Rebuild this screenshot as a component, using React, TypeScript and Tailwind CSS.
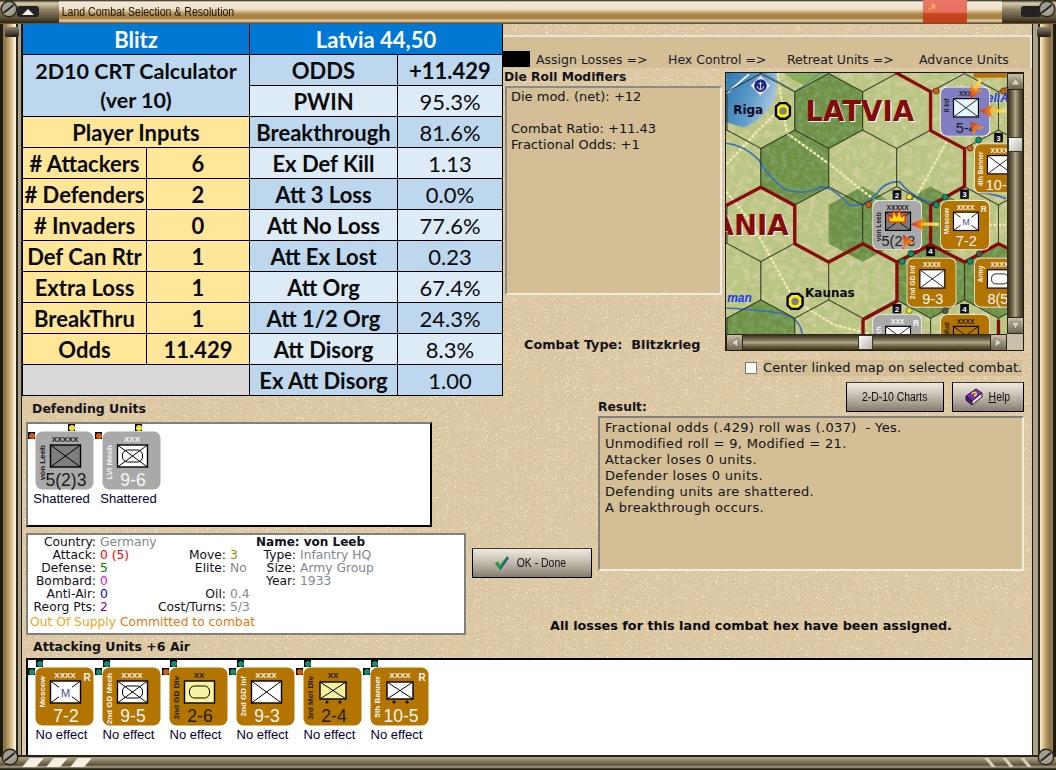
import React from 'react';

// ---------- counters ----------

type BoxKind = 'x' | 'm' | 'mech' | 'oval' | 'wheels' | 'xsmall';

interface CounterSpec {
  name: string;
  size: string;
  value: string;
  tone: 'orange' | 'gray' | 'purple';
  box: BoxKind;
  dark?: boolean;
  sizeDark?: boolean;
  reserve?: boolean;
  nameTop?: number;
  fill?: string;
  fire?: boolean;
}

const toneFill = { orange: '#b37400', gray: '#a9a9a9', purple: '#7f7fc2' };

const CounterArt: React.FC<{ c: CounterSpec }> = ({ c }) => {
  const ink = c.dark ? '#1c1c1c' : '#f6f6f6';
  const fill = c.fill ?? '#ffffff';
  const small = c.box === 'wheels' || c.box === 'xsmall';
  const bx = small ? 17 : 15.5;
  const by = small ? 15 : 14;
  const bw = small ? 26 : 30;
  const bh = small ? 17 : 22;
  return (
    <g fontFamily="'Liberation Sans', sans-serif">
      <rect x="0.5" y="0.5" width="58" height="58" rx="7" fill={toneFill[c.tone]} />
      <text x="30" y="11" textAnchor="middle" fontSize="8" fontWeight="700" fill={c.sizeDark ? '#1c1c1c' : '#f4f4f4'}>
        {c.size}
      </text>
      {c.reserve && (
        <text x="52" y="14" textAnchor="middle" fontSize="10" fontWeight="700" fill="#f6f6f6">
          R
        </text>
      )}
      <text
        transform={`translate(10 ${c.nameTop ?? 9}) rotate(-90)`}
        textAnchor="end"
        fontSize="8"
        fontWeight="700"
        fill={c.dark ? '#1c1c1c' : '#f4f4f4'}
      >
        {c.name}
      </text>
      <rect x={bx} y={by} width={bw} height={bh} fill={fill} stroke="#000" strokeWidth="1.4" />
      {c.box !== 'oval' && (
        <path
          d={`M${bx} ${by}L${bx + bw} ${by + bh}M${bx + bw} ${by}L${bx} ${by + bh}`}
          stroke="#000"
          strokeWidth="1"
        />
      )}
      {(c.box === 'oval' || c.box === 'mech') && (
        <rect x={bx + 5} y={by + 5} width={bw - 10} height={bh - 10} rx="5" fill="none" stroke="#000" strokeWidth="1" />
      )}
      {c.box === 'm' && (
        <>
          <rect x="24" y="19" width="13" height="12" fill={fill} />
          <text x="30.5" y="30" textAnchor="middle" fontSize="11" fill="#4a4a9a">
            M
          </text>
        </>
      )}
      {small && (
        <>
          <circle cx="24" cy="35" r="1.6" fill="#111" />
          <circle cx="37" cy="35" r="1.6" fill="#111" />
        </>
      )}
      {c.fire && (
        <path
          d="M20 26L19 17L23 21L25 12L29 19L32 11L35 20L39 16L39 26Z"
          fill="#ffe000"
          stroke="#e8261a"
          strokeWidth="1.4"
        />
      )}
      <text x="31" y="55" textAnchor="middle" fontSize="17.5" fill={ink}>
        {c.value}
      </text>
    </g>
  );
};

const Dot: React.FC<{ color: string; className: string }> = ({ color, className }) => (
  <span className={`absolute w-[7px] h-[7px] bg-black ${className}`}>
    <span className="block w-[6px] h-[6px] rounded-full m-[0.5px]" style={{ backgroundColor: color }} />
  </span>
);

const Unit: React.FC<{
  c: CounterSpec;
  label: string;
  left: string;
  top: string;
  topClass: string;
}> = ({ c, label, left, top, topClass }) => (
  <div className="relative w-[59px] flex flex-col items-center">
    <Dot color={left} className="left-[-7px] top-[1px]" />
    <Dot color={top} className={`top-[-7px] ${topClass}`} />
    <svg width="59" height="59" viewBox="0 0 59 59" className="block">
      <CounterArt c={c} />
    </svg>
    <div className="mt-[1px] mr-[6px] text-[13px] leading-[16px] whitespace-nowrap text-[#000030] font-['Liberation_Sans',sans-serif]">
      {label}
    </div>
  </div>
);

const defenders: { c: CounterSpec; left: string; top: string }[] = [
  {
    c: { name: 'von Leeb', size: 'XXXXX', value: '5(2)3', tone: 'gray', box: 'x', dark: true, sizeDark: true, nameTop: 14, fill: '#7d7d7d' },
    left: '#d65a10',
    top: '#f2e233',
  },
  {
    c: { name: 'LVI Mech', size: 'XXX', value: '9-6', tone: 'gray', box: 'mech', nameTop: 14 },
    left: '#d65a10',
    top: '#f2e233',
  },
];

const attackers: { c: CounterSpec; left: string; top: string }[] = [
  { c: { name: 'Moscow', size: 'XXXX', value: '7-2', tone: 'orange', box: 'm', reserve: true }, left: '#0e9070', top: '#0e9070' },
  { c: { name: '2nd GD Mech', size: 'XXXX', value: '9-5', tone: 'orange', box: 'mech', nameTop: 6 }, left: '#0e9070', top: '#0e9070' },
  { c: { name: '2nd GD Div', size: 'XX', value: '2-6', tone: 'orange', box: 'oval', dark: true, sizeDark: true, fill: '#f6f3a0' }, left: '#d65a10', top: '#0e9070' },
  { c: { name: '2nd GD Inf', size: 'XXXX', value: '9-3', tone: 'orange', box: 'x' }, left: '#0e9070', top: '#0e9070' },
  { c: { name: '3rd Mot Div', size: 'XX', value: '2-4', tone: 'orange', box: 'wheels', dark: true, sizeDark: true, fill: '#f6f3a0' }, left: '#d65a10', top: '#0e9070' },
  { c: { name: '5th Banner', size: 'XXXX', value: '10-5', tone: 'orange', box: 'xsmall', reserve: true }, left: '#0e9070', top: '#0e9070' },
];

// ---------- map ----------

const hexPoints = (cx: number, cy: number) =>
  `${cx},${cy - 113} ${cx + 102},${cy - 58} ${cx + 102},${cy + 58} ${cx},${cy + 113} ${cx - 102},${cy + 58} ${cx - 102},${cy - 58}`;

const hexCentres: [number, number][] = [];
[-32, 138, 308, 478, 648, 818].forEach((y, row) => {
  const start = row % 2 === 0 ? 19 : 121;
  for (let x = start - 204; x < 1000; x += 204) hexCentres.push([x, y]);
});

const Arrow: React.FC<{ x: number; y: number; angle: number; tail?: number }> = ({ x, y, angle, tail = 50 }) => (
  <g transform={`translate(${x} ${y}) rotate(${angle})`}>
    {tail > 0 && <rect x={-28 - tail} y="-5" width={tail} height="10" fill="url(#tailGrad)" />}
    <path d="M0 0L-42 -21L-30 0L-42 21Z" fill="url(#headGrad)" />
  </g>
);

const Badge: React.FC<{ x: number; y: number; n: string }> = ({ x, y, n }) => (
  <g>
    <rect x={x - 13} y={y - 14} width="26" height="28" fill="#0a0a14" />
    <text x={x} y={y + 9} textAnchor="middle" fontSize="24" fontWeight="700" fill="#fff" fontFamily="'Liberation Sans', sans-serif">
      {n}
    </text>
  </g>
);

const mapDots: [number, number, string][] = [
  [648, 78, '#d65a10'],
  [850, 78, '#d65a10'],
  [445, 420, '#d65a10'],
  [750, 250, '#d65a10'],
  [775, 225, '#0e9070'],
  [675, 397, '#0e9070'],
  [648, 420, '#0e9070'],
  [545, 590, '#0e9070'],
  [572, 567, '#0e9070'],
  [750, 590, '#0e9070'],
  [567, 396, '#f2e233'],
  [567, 738, '#f2e233'],
  [777, 567, '#555555'],
  [675, 738, '#555555'],
];

const place = (c: CounterSpec, x: number, y: number) => (
  <g key={`${x}-${y}`} transform={`translate(${x} ${y}) scale(2.5)`}>
    <rect x="-0.3" y="-0.3" width="59.6" height="59.6" rx="7" fill="#fff" />
    <CounterArt c={c} />
  </g>
);

const MapView: React.FC = () => (
  <svg width="281" height="261" viewBox="17 24 843 784" className="block shrink-0">
    <defs>
      <filter id="mottle" x="0" y="0" width="100%" height="100%">
        <feTurbulence type="fractalNoise" baseFrequency="0.045" numOctaves="3" seed="7" result="n" />
        <feColorMatrix in="n" values="0 0 0 0 0.62  0 0 0 0 0.62  0 0 0 0 0.32  0 0 0 3.4 -1.5" result="tan" />
        <feComposite in="tan" in2="SourceAlpha" operator="in" result="tanClip" />
        <feMerge>
          <feMergeNode in="SourceGraphic" />
          <feMergeNode in="tanClip" />
        </feMerge>
      </filter>
      <filter id="forest" x="0" y="0" width="100%" height="100%">
        <feTurbulence type="fractalNoise" baseFrequency="0.06" numOctaves="4" seed="3" />
        <feColorMatrix values="0 0 0 0 0.2  0 0 0 0 0.36  0 0 0 0 0.12  0 0 0 3.2 -1.3" />
        <feComposite in2="SourceAlpha" operator="in" />
        <feMerge>
          <feMergeNode in="SourceGraphic" />
          <feMergeNode />
        </feMerge>
      </filter>
      <linearGradient id="sea" x1="0" y1="0" x2="1" y2="0.4">
        <stop offset="0" stopColor="#2f79b2" />
        <stop offset="0.6" stopColor="#5f9ccb" />
        <stop offset="1" stopColor="#a9c8e2" />
      </linearGradient>
      <linearGradient id="tailGrad">
        <stop offset="0" stopColor="#ffe070" />
        <stop offset="1" stopColor="#ffb000" />
      </linearGradient>
      <linearGradient id="headGrad" x1="0" y1="0" x2="1" y2="0">
        <stop offset="0" stopColor="#f0a020" />
        <stop offset="1" stopColor="#dc2a18" />
      </linearGradient>
    </defs>

    <rect x="17" y="24" width="843" height="784" fill="#b9c583" filter="url(#mottle)" />
    {[[325, 138], [223, 308], [427, 478], [631, 478], [835, 648], [121, 818], [631, 648]].map(([x, y]) => (
      <polygon key={`${x}-${y}`} points={hexPoints(x, y)} fill="#6f9044" filter="url(#forest)" />
    ))}
    <path d="M17 24H168Q172 70 160 105Q130 165 70 188L17 172Z" fill="url(#sea)" />
    <path d="M190 24Q215 45 250 60Q300 40 330 24Z" fill="#86b05a" />
    <path d="M17 86L85 28" stroke="#fff" strokeWidth="5" fill="none" />

    {/* roads */}
    <g fill="none" stroke="#efe9b4" strokeWidth="7" strokeDasharray="10 4">
      <path d="M172 24L182 100L200 205L330 300L430 380L490 425" />
      <path d="M180 130L100 210L17 300" />
      <path d="M17 380L90 470L135 550L222 708" />
      <path d="M222 708L340 780L450 808" />
      <path d="M680 230L630 320L582 405" />
      <path d="M805 480H860" />
    </g>

    {/* rivers */}
    <g fill="none" stroke="#3a70b8" strokeWidth="5">
      <path d="M17 235Q70 240 115 285Q140 330 190 372Q250 395 305 365Q350 375 385 420Q430 430 470 385Q500 345 540 352Q570 395 640 415" />
      <path d="M17 730Q100 735 180 745Q240 760 245 808" />
      <path d="M780 385Q820 385 858 402" />
      <path d="M130 24L225 80L300 24" strokeWidth="2" />
    </g>

    {hexCentres.map(([x, y]) => (
      <polygon key={`${x}-${y}`} points={hexPoints(x, y)} fill="none" stroke="#20281c" strokeWidth="1.8" />
    ))}

    {/* national borders */}
    <g fill="none" stroke="#8a0b0b" strokeWidth="10" strokeLinejoin="round">
      <path d="M525 22L631 80V197L733 252V365L631 422V540L733 592L835 537L862 550" />
      <path d="M631 540L530 592V710L428 765V810" />
      <path d="M530 592L428 537L325 592L223 537V422L121 367L17 422" />
      <path d="M835 765V810" />
    </g>

    <g fontFamily="'DejaVu Sans', sans-serif" fontWeight="700">
      <text x="258" y="172" fontSize="83" fill="#fff">LATVIA</text>
      <text x="255" y="169" fontSize="83" fill="#860a0a">LATVIA</text>
      <text x="-21" y="513" fontSize="83" fill="#fff">ANIA</text>
      <text x="-24" y="510" fontSize="83" fill="#860a0a">ANIA</text>
      <text x="38" y="148" fontSize="36" fill="#0a0a1a">Riga</text>
      <text x="254" y="698" fontSize="36" fill="#0a0a0a">Kaunas</text>
    </g>
    <g fontFamily="'Liberation Sans', sans-serif" fontStyle="italic" fill="#1a3cf0" fontSize="36" fontWeight="700">
      <text x="20" y="712">man</text>
      <text x="800" y="112">eliA</text>
    </g>

    {/* cities */}
    <g>
      <polygon points="163,123 177,111 198,111 212,123 212,153 198,165 177,165 163,153" fill="#000" />
      <polygon points="170,126 180,118 195,118 205,126 205,150 195,158 180,158 170,150" fill="#f6ec10" />
      <circle cx="188" cy="138" r="11" fill="#808080" />
      <polygon points="198,696 211,684 236,684 250,696 250,724 236,736 211,736 198,724" fill="#000" />
      <polygon points="205,700 214,691 233,691 243,700 243,720 233,729 214,729 205,720" fill="#f6ec10" />
      <circle cx="224" cy="710" r="11" fill="#808080" />
    </g>

    {/* naval base */}
    <g transform="translate(120 62)">
      <polygon points="0,-30 30,0 0,30 -30,0" fill="#f4f4f8" stroke="#9aa0b0" strokeWidth="2" />
      <circle r="19" fill="#1c2580" />
      <path d="M0 -12V11M-10 1Q-8 12 0 12Q8 12 10 1M-6 -6H6" stroke="#fff" strokeWidth="2.5" fill="none" />
    </g>

    <rect x="760" y="14" width="100" height="24" fill="#b37400" />

    {place({ name: 'II Inf', size: 'XXX', value: '5-4', tone: 'purple', box: 'x', dark: true, sizeDark: true, nameTop: 14, fill: '#e6f6fb' }, 661, 66)}
    {place({ name: '4th Banner', size: 'XXXX', value: '10-6', tone: 'orange', box: 'x' }, 763, 237)}
    {place({ name: 'von Leeb', size: 'XXXXX', value: '5(2)3', tone: 'gray', box: 'x', dark: true, sizeDark: true, nameTop: 14, fill: '#7d7d7d', fire: true }, 457, 407)}
    {place({ name: 'Moscow', size: 'XXXX', value: '7-2', tone: 'orange', box: 'm', reserve: true }, 661, 407)}
    {place({ name: '2nd GD Inf', size: 'XXXX', value: '9-3', tone: 'orange', box: 'x' }, 560, 580)}
    {place({ name: 'Army', size: 'XXXX', value: '8(5)', tone: 'orange', box: 'oval' }, 763, 580)}
    {place({ name: 'LVI Mech', size: 'XXX', value: '9-6', tone: 'gray', box: 'x', reserve: true, nameTop: 14 }, 457, 750)}
    {place({ name: 'Mud', size: 'XXXX', value: '7-2', tone: 'orange', box: 'x', sizeDark: true, dark: true, fill: '#b37400' }, 661, 750)}

    {mapDots.map(([x, y, color]) => (
      <circle key={`${x}-${y}`} cx={x} cy={y} r="9" fill={color} stroke="#111" strokeWidth="1.5" />
    ))}
    <Badge x={530} y={390} n="2" />
    <Badge x={733} y={388} n="3" />
    <Badge x={835} y={218} n="3" />
    <Badge x={631} y={560} n="4" />
    <Badge x={530} y={732} n="2" />
    <Badge x={733} y={732} n="4" />

    <Arrow x={750} y={102} angle={118} tail={38} />
    <Arrow x={778} y={138} angle={180} tail={50} />
    <Arrow x={750} y={170} angle={-130} tail={0} />
    <Arrow x={572} y={478} angle={180} tail={55} />
    <Arrow x={548} y={510} angle={-120} tail={0} />
  </svg>
);

// ---------- small widgets ----------

const scrollBtn =
  'w-[17px] h-[17px] shrink-0 flex items-center justify-center bg-[linear-gradient(180deg,#c8c0a8,#6d6650)] border border-[#2a2518]';

const Chevron: React.FC<{ d: string }> = ({ d }) => (
  <svg width="11" height="11" viewBox="0 0 11 11">
    <path d={d} fill="#d8d2c0" stroke="#5a5444" strokeWidth="0.6" />
  </svg>
);

const Thumb: React.FC = () => (
  <div className="w-[15px] h-[15px] shrink-0 ml-[1px] bg-[linear-gradient(135deg,#ffffff,#b8b4a8)] border border-[#3a3528]" />
);

const VScroll: React.FC = () => (
  <div className="w-[17px] h-full shrink-0 flex flex-col bg-[linear-gradient(90deg,#2a2418,#6e6448_30%,#b0a688_50%,#6e6448_70%,#2a2418)]">
    <div className={scrollBtn}>
      <Chevron d="M5.5 2L10 9H1Z" />
    </div>
    <div className="h-[47px]" />
    <Thumb />
    <div className="flex-1" />
    <div className={scrollBtn}>
      <Chevron d="M5.5 9L10 2H1Z" />
    </div>
  </div>
);

const HScroll: React.FC = () => (
  <div className="h-[17px] w-[281px] shrink-0 flex items-center bg-[linear-gradient(180deg,#2a2418,#6e6448_30%,#b0a688_50%,#6e6448_70%,#2a2418)]">
    <div className={scrollBtn}>
      <Chevron d="M2 5.5L9 1V10Z" />
    </div>
    <div className="w-[114px]" />
    <Thumb />
    <div className="flex-1" />
    <div className={scrollBtn}>
      <Chevron d="M9 5.5L2 1V10Z" />
    </div>
  </div>
);

const winButton =
  'flex items-center justify-center gap-[3px] border border-black border-t-[#3a3a3a] bg-[linear-gradient(180deg,#f1e9de_0%,#d5cdc1_30%,#aaa294_70%,#857e70_100%)] text-[12px] text-[#111] font-[\'Liberation_Sans\',sans-serif]';

const Screw: React.FC<{ className: string }> = ({ className }) => (
  <svg width="18" height="18" viewBox="0 0 18 18" className={`absolute ${className}`}>
    <circle cx="9" cy="9" r="8.5" fill="#2a2618" />
    <circle cx="9" cy="9" r="7" fill="#a09c90" />
    <path d="M4 13L14 5" stroke="#33302a" strokeWidth="2.4" />
    <path d="M4 15L15 6" stroke="#e0dcd0" strokeWidth="0.8" />
  </svg>
);

const Detail: React.FC<{ label: string; value?: string; color?: string; extra?: string; extraColor?: string }> = ({
  label,
  value,
  color,
  extra,
  extraColor,
}) => (
  <>
    <div className="text-right whitespace-nowrap">{label}</div>
    <div className="pl-[4px] whitespace-nowrap" style={{ color }}>
      {value}
      {extra && <span style={{ color: extraColor }}> {extra}</span>}
    </div>
  </>
);

const Cell: React.FC<{ className?: string; children?: React.ReactNode }> = ({ className = '', children }) => (
  <div className={`flex items-center justify-center pt-[2px] whitespace-nowrap border-b border-r border-black ${className}`}>
    {children}
  </div>
);

const statRows: [string, string, string][] = [
  ['Breakthrough', '81.6%', 'bg-[#bdd7ee]'],
  ['Ex Def Kill', '1.13', 'bg-[#ddebf7]'],
  ['Att 3 Loss', '0.0%', 'bg-[#bdd7ee]'],
  ['Att No Loss', '77.6%', 'bg-[#ddebf7]'],
  ['Att Ex Lost', '0.23', 'bg-[#bdd7ee]'],
  ['Att Org', '67.4%', 'bg-[#ddebf7]'],
  ['Att 1/2 Org', '24.3%', 'bg-[#bdd7ee]'],
  ['Att Disorg', '8.3%', 'bg-[#ddebf7]'],
  ['Ex Att Disorg', '1.00', 'bg-[#bdd7ee]'],
];

const inputRows: [string, string][] = [
  ['# Attackers', '6'],
  ['# Defenders', '2'],
  ['# Invaders', '0'],
  ['Def Can Rtr', '1'],
  ['Extra Loss', '1'],
  ['BreakThru', '1'],
  ['Odds', '11.429'],
];

const CalcSheet: React.FC = () => (
  <div className="absolute left-[22px] top-[24px] z-10 w-[481px] grid grid-cols-[124px_103px_148px_105px] auto-rows-[31px] text-[22px] leading-none text-[#0a0a0a] font-['Lato',sans-serif] border-l border-black">
    <Cell className="col-span-2 bg-[#0078d4] text-white font-bold">Blitz</Cell>
    <Cell className="col-span-2 bg-[#0078d4] text-white font-bold">Latvia 44,50</Cell>

    <div className="col-span-2 row-span-2 flex flex-col pt-[2px] bg-[#bdd7ee] text-[21.5px] font-bold border-b border-r border-black">
      <div className="h-[30px] flex items-center justify-center">2D10 CRT Calculator</div>
      <div className="h-[31px] flex items-center justify-center">(ver 10)</div>
    </div>
    <Cell className="bg-[#bdd7ee] font-bold">ODDS</Cell>
    <Cell className="bg-[#bdd7ee] font-bold">+11.429</Cell>
    <Cell className="col-start-3 bg-[#ddebf7] font-bold">PWIN</Cell>
    <Cell className="bg-[#ddebf7]">95.3%</Cell>

    <Cell className="col-span-2 bg-[#ffe699] font-bold">Player Inputs</Cell>
    <Cell className={`${statRows[0][2]} font-bold`}>{statRows[0][0]}</Cell>
    <Cell className={statRows[0][2]}>{statRows[0][1]}</Cell>

    {inputRows.map(([label, val], i) => (
      <React.Fragment key={label}>
        <Cell className="bg-[#ffe699] font-bold">{label}</Cell>
        <Cell className="bg-[#ffe699] font-bold">{val}</Cell>
        <Cell className={`${statRows[i + 1][2]} font-bold`}>{statRows[i + 1][0]}</Cell>
        <Cell className={statRows[i + 1][2]}>{statRows[i + 1][1]}</Cell>
      </React.Fragment>
    ))}

    <Cell className="col-span-2 bg-[#d9d9d9]" />
    <Cell className={`${statRows[8][2]} font-bold`}>{statRows[8][0]}</Cell>
    <Cell className={statRows[8][2]}>{statRows[8][1]}</Cell>
  </div>
);

const sideStripes =
  'bg-[linear-gradient(90deg,#1e1a10_0,#1e1a10_3px,#8c7a55_3px,#8c7a55_6px,#a68448_6px,#e8d2a2_13px,#f4eee0_14px,#f4eee0_16px,#2a2418_16px,#2a2418_18px,#aaa28a_18px,#aaa28a_21px,#1e1a10_21px)]';
const sideStripesRight =
  'bg-[linear-gradient(90deg,#1e1a10_0,#1e1a10_1px,#aaa28a_1px,#aaa28a_6px,#2a2418_6px,#2a2418_8px,#f4eee0_8px,#e8d2a2_10px,#a68448_16px,#8c7a55_17px,#8c7a55_21px,#1e1a10_21px)]';
const bronze =
  'bg-[linear-gradient(180deg,#1a160c_0,#d8ccae_3px,#8c8064_10px,#5a5038_18px,#2a2418_23px)]';

export default function App() {
  return (
    <div className="relative w-[1056px] h-[770px] overflow-hidden flex flex-col bg-[#1e1a10] font-['DejaVu_Sans',sans-serif] text-[13px] text-[#12121a]">
      {/* title bar */}
      <div className="h-6 shrink-0 flex border-b border-[#6a5430] bg-[linear-gradient(180deg,#1a160c_0,#f2e8d6_2px,#efe2ca_9px,#b08a4c_14px,#a67c3c_18px,#e6d6b4_21px,#6a5430_23px)]">
        <div className={`w-[59px] shrink-0 flex items-center pl-[17px] ${bronze}`}>
          <div className="w-[22px] h-[11px] rounded-[3px] bg-[#222] flex items-center justify-center">
            <div className="w-0 h-0 border-x-[6px] border-x-transparent border-b-[6px] border-b-[#f4f0e4]" />
          </div>
        </div>
        <div className="pl-[3px] text-[12px] leading-[24px] text-[#1a1408] font-['Liberation_Sans',sans-serif] whitespace-nowrap origin-left scale-x-[0.88]">
          Land Combat Selection &amp; Resolution
        </div>
        <div className="flex-1" />
        <div className="w-[44px] shrink-0 mr-[35px] pl-[5px] text-[9px] leading-[14px] text-[#f2d840] bg-[linear-gradient(180deg,#ea7767_0,#e87060_12px,#c8441a_14px,#c43f18_24px)]">
          ☭
        </div>
        <div className={`w-[54px] shrink-0 flex items-center pl-[19px] ${bronze}`}>
          <div className="w-[20px] h-[11px] rounded-[3px] bg-[#222]" />
        </div>
      </div>

      <div className="flex-1 min-h-0 flex">
        <div className={`w-[22px] shrink-0 ${sideStripes}`} />

        {/* body */}
        <div className="relative flex-1 min-w-0 flex flex-col bg-[#e0cca6]">
          <svg className="absolute inset-0 w-full h-full pointer-events-none">
            <filter id="grain">
              <feTurbulence type="fractalNoise" baseFrequency="0.7" numOctaves="2" seed="2" />
              <feColorMatrix values="0 0 0 0 0.45  0 0 0 0 0.36  0 0 0 0 0.2  0 0 0 1.4 -0.55" />
            </filter>
            <filter id="specks">
              <feTurbulence type="fractalNoise" baseFrequency="0.9" numOctaves="1" seed="9" />
              <feColorMatrix values="0 0 0 0 1  0 0 0 0 1  0 0 0 0 0.94  0 0 0 14 -9.4" />
            </filter>
            <rect width="100%" height="100%" filter="url(#grain)" opacity="0.5" />
            <rect width="100%" height="100%" filter="url(#specks)" opacity="0.8" />
          </svg>

          {/* phase bar */}
          <div className="relative mt-[11px] h-[33px] shrink-0 bg-[#d3be96] border-t-2 border-r-2 border-[#e8e4dc] flex items-end">
            <div className="w-[480px] shrink-0" />
            <div className="w-[28px] h-[16px] mb-[1px] bg-black shrink-0" />
            <div className="ml-[6px] flex text-[12.5px] leading-[17px] text-[#1a1a2a] whitespace-nowrap">
              <span className="w-[132px]">Assign Losses =&gt;</span>
              <span className="w-[119px]">Hex Control =&gt;</span>
              <span className="w-[132px]">Retreat Units =&gt;</span>
              <span>Advance Units</span>
            </div>
          </div>

          {/* modifiers and map */}
          <div className="relative h-[313px] shrink-0 flex">
            <div className="w-[482px] shrink-0" />
            <div className="w-[218px] shrink-0 flex flex-col">
              <div className="h-[18px] pt-[1px] leading-[17px] text-[12.3px] font-bold">Die Roll Modifiers</div>
              <div className="ml-[1px] w-[217px] h-[209px] bg-[#d3be96] border-2 border-[#8a8a86] border-r-[#f0ece2] border-b-[#f0ece2] pl-[4px] pt-[1px] leading-[16px]">
                <div>Die mod. (net): +12</div>
                <div className="h-4" />
                <div>Combat Ratio: +11.43</div>
                <div>Fractional Odds: +1</div>
              </div>
              <div className="mt-[40px] pl-[20px] text-[12.8px] font-bold whitespace-pre">Combat Type:  Blitzkrieg</div>
            </div>
            <div className="ml-[3px] w-[299px] flex flex-col pt-[4px]">
              <div className="w-[299px] h-[279px] border border-[#1e1a10] flex flex-col overflow-hidden">
                <div className="flex h-[261px]">
                  <MapView />
                  <VScroll />
                </div>
                <div className="flex">
                  <HScroll />
                  <div className="w-[17px] bg-[#c8c0ac]" />
                </div>
              </div>
              <div className="mt-[9px] flex items-center">
                <div className="ml-[20px] w-[12px] h-[12px] bg-white border border-[#777] shrink-0" />
                <div className="ml-[6px] bg-[#d3be96] h-[16px] leading-[16px] tracking-[0.08px] whitespace-nowrap">
                  Center linked map on selected combat.
                </div>
              </div>
            </div>
          </div>

          {/* units, details, result */}
          <div className="relative h-[259px] shrink-0 flex">
            <div className="ml-[4px] w-[440px] shrink-0 flex flex-col pt-[20px]">
              <div className="ml-[6px] h-[16px] leading-[16px] text-[12.5px] font-bold">Defending Units</div>
              <div className="mt-[5px] w-[406px] h-[105px] bg-white border-2 border-[#808080] border-r-black border-b-black pl-[7px] pt-[7px] flex gap-2">
                {defenders.map((d) => (
                  <Unit key={d.c.name} c={d.c} label="Shattered" left={d.left} top={d.top} topClass="left-[33px]" />
                ))}
              </div>
              <div className="mt-[6px] w-[440px] h-[102px] bg-white border-2 border-[#808080] pl-[2px] pt-[1px] text-[12.3px] leading-[13px] text-[#101020]">
                <div className="grid grid-cols-[66px_40px_90px_30px_40px_auto]">
                  <Detail label="Country:" value="Germany" color="#808890" />
                  <div />
                  <div />
                  <div className="col-span-2 font-bold text-[12px] whitespace-nowrap">Name: von Leeb</div>

                  <Detail label="Attack:" value="0" color="#f00000" extra="(5)" extraColor="#f00000" />
                  <Detail label="Move:" value="3" color="#a08a00" />
                  <Detail label="Type:" value="Infantry HQ" color="#808890" />

                  <Detail label="Defense:" value="5" color="#008000" />
                  <Detail label="Elite:" value="No" color="#808890" />
                  <Detail label="Size:" value="Army Group" color="#808890" />

                  <Detail label="Bombard:" value="0" color="#f000f0" />
                  <div />
                  <div />
                  <Detail label="Year:" value="1933" color="#808890" />

                  <Detail label="Anti-Air:" value="0" color="#0000e0" />
                  <Detail label="Oil:" value="0.4" color="#808890" />
                  <div className="col-span-2" />

                  <Detail label="Reorg Pts:" value="2" color="#800080" />
                  <Detail label="Cost/Turns:" value="5/3" color="#808890" />
                </div>
                <div className="mt-[2px] whitespace-nowrap">
                  <span className="text-[#e8a820]">Out Of Supply </span>
                  <span className="text-[#e07a10]">Committed to combat</span>
                </div>
              </div>
            </div>

            <div className="ml-[6px] w-[120px] shrink-0 pt-[167px]">
              <button className={`${winButton} w-[120px] h-[30px]`}>
                <svg width="16" height="16" viewBox="0 0 16 16">
                  <path d="M1.5 9L4 7L6.5 11L13.5 1.5L15 3L6.5 15Z" fill="#1a40d0" />
                  <path d="M1 8L3.5 6.5L6 10L13 1L14 2L6 14Z" fill="#20a020" />
                </svg>
                <span className="inline-block scale-x-[0.87]">OK - Done</span>
              </button>
            </div>

            <div className="ml-[6px] w-[426px] shrink-0 flex flex-col">
              <div className="h-[35px] flex items-end justify-between">
                <div className="font-bold text-[12.3px] leading-[16px] pb-[1px]">Result:</div>
                <div className="flex gap-2 self-start pt-[1px]">
                  <button className={`${winButton} w-[98px] h-[30px]`}>
                    <span className="inline-block scale-x-[0.87] whitespace-nowrap">2-D-10 Charts</span>
                  </button>
                  <button className={`${winButton} w-[72px] h-[30px]`}>
                    <svg width="20" height="18" viewBox="0 0 20 18">
                      <path d="M2 8L12 1L18 5L8 13Z" fill="#7d2fa8" stroke="#2c0f46" />
                      <path d="M2 8L8 13V17L2 12Z" fill="#4a1a6e" stroke="#2c0f46" />
                      <path d="M8 13L18 5V9L8 17Z" fill="#e8e0f0" stroke="#2c0f46" />
                      <path d="M8 6Q10 3 12 5Q13 7 10 8" fill="none" stroke="#f6e020" strokeWidth="1.6" />
                    </svg>
                    <span className="inline-block scale-x-[0.87]">
                      <span className="underline">H</span>elp
                    </span>
                  </button>
                </div>
              </div>
              <div className="h-[155px] bg-[#d3be96] border-2 border-[#808080] border-r-[#f0ece2] border-b-[#f0ece2] pl-[5px] pt-[2px] leading-[16px] tracking-[0.33px] whitespace-pre">
                <div>Fractional odds (.429) roll was (.037)  - Yes.</div>
                <div>Unmodified roll = 9, Modified = 21.</div>
                <div>Attacker loses 0 units.</div>
                <div>Defender loses 0 units.</div>
                <div>Defending units are shattered.</div>
                <div>A breakthrough occurs.</div>
              </div>
              <div className="mt-[47px] ml-[-48px] text-[12.8px] font-bold leading-[16px] text-[#0a0a0a] whitespace-nowrap">
                All losses for this land combat hex have been assigned.
              </div>
            </div>
          </div>

          {/* attackers */}
          <div className="relative h-[18px] shrink-0 pl-[11px] leading-[14px] text-[12.5px] font-bold">Attacking Units +6 Air</div>
          <div className="relative flex-1 ml-[4px] bg-white border-t-2 border-l-2 border-black pl-[7px] pt-[7px] flex gap-2">
            {attackers.map((a) => (
              <Unit key={a.c.name} c={a.c} label="No effect" left={a.left} top={a.top} topClass="left-[1px]" />
            ))}
          </div>
        </div>

        <div className={`w-[24px] shrink-0 ${sideStripesRight}`} />
      </div>

      {/* bottom frame */}
      <div className="h-[15px] shrink-0 flex bg-[linear-gradient(180deg,#2a2418_0,#2a2418_2px,#aaa28a_2px,#8c8064_6px,#5a5038_10px,#aaa28a_12px,#1e1a10_14px)]">
        <div className="w-[26px] shrink-0" />
        <div className="flex h-[9px] mt-[3px] gap-[10px]">
          {[0, 1, 2].map((i) => (
            <div key={i} className="w-[14px] h-[9px] bg-[#f4eee0] skew-x-[-40deg]" />
          ))}
        </div>
        <div className="flex-1" />
        <div className="flex h-[9px] mt-[3px] gap-[14px] mr-[28px]">
          {[0, 1, 2].map((i) => (
            <div key={i} className="w-[4px] h-[9px] bg-[#d8d0bc] skew-x-[40deg]" />
          ))}
        </div>
      </div>

      <CalcSheet />

      {/* frame studs and screws */}
      <div className="absolute left-[5px] top-[27px] w-[14px] h-[10px] rounded-[2px] bg-[linear-gradient(180deg,#8a8470,#1e1a10)]" />
      <div className="absolute right-[5px] top-[27px] w-[14px] h-[10px] rounded-[2px] bg-[linear-gradient(180deg,#8a8470,#1e1a10)]" />
      <Screw className="left-0 top-0" />
      <Screw className="right-0 top-0" />
      <Screw className="left-[1px] bottom-[4px]" />
      <Screw className="right-[1px] bottom-[4px]" />
    </div>
  );
}
